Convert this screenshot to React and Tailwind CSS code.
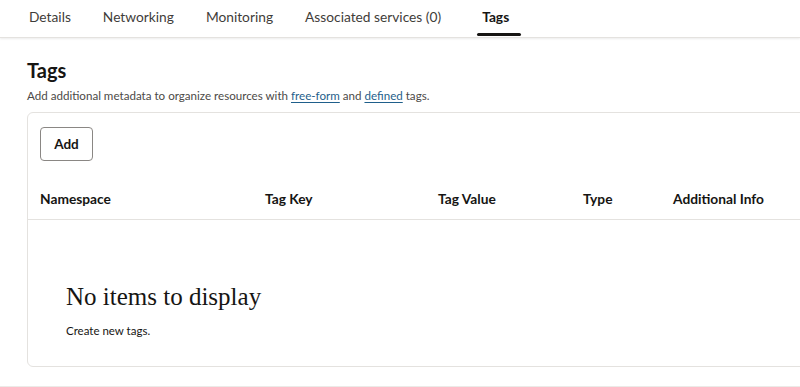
const tabs = ['Details', 'Networking', 'Monitoring', 'Associated services (0)'];

const columns = [
  { label: 'Namespace', w: 'w-[225px]' },
  { label: 'Tag Key', w: 'w-[173px]' },
  { label: 'Tag Value', w: 'w-[145px]' },
  { label: 'Type', w: 'w-[90px]' },
  { label: 'Additional Info', w: 'w-[140px]' },
];

export default function App() {
  return (
    <div className="w-[800px] h-[387px] overflow-hidden bg-white text-[#161513] font-['Lato',sans-serif]">
      {/* Tab bar */}
      <div className="h-[38px] border-b border-[#e4e2df] shadow-[0_1px_2px_rgba(0,0,0,0.08)] flex items-stretch pl-[29px]">
        <div className="flex items-stretch gap-[32px] text-[13.75px] text-[#3f3d3a]">
          {tabs.map((t) => (
            <div key={t} className="flex items-center pb-[3px]">
              {t}
            </div>
          ))}
          <div className="relative flex items-center pb-[3px] ml-[9px] font-bold text-[#161513]">
            Tags
            <span className="absolute -left-[5px] -right-[12px] bottom-[1px] h-[3px] rounded-full bg-[#161513]" />
          </div>
        </div>
      </div>

      {/* Section */}
      <div className="pl-[27px]">
        <h2 className="mt-[18px] text-[20px] leading-[28px] font-bold">Tags</h2>
        <p className="mt-[5px] text-[11.6px] leading-[14px] text-[#4c4a47]">
          Add additional metadata to organize resources with{' '}
          <span className="text-[#1f5f8b] underline underline-offset-2">free-form</span> and{' '}
          <span className="text-[#1f5f8b] underline underline-offset-2">defined</span> tags.
        </p>

        {/* Card */}
        <div className="mt-[9px] w-[800px] h-[255px] border border-[#e4e2df] rounded-[6px]">
          <div className="pl-[12px] pt-[14px]">
            <button className="w-[53px] h-[34px] border border-[#8a8784] rounded-[4px] text-[13.5px] font-bold">
              Add
            </button>
          </div>
          <div className="mt-[20px] h-[39px] border-b border-[#e4e2df] flex items-center pl-[12px] text-[13.75px] font-bold pb-[2px]">
            {columns.map((c) => (
              <div key={c.label} className={c.w}>
                {c.label}
              </div>
            ))}
          </div>
          <div className="pl-[38px] pt-[62px]">
            <div className="text-[25px] leading-[30px] font-['Liberation_Serif',serif]">No items to display</div>
            <div className="mt-[12px] text-[11.5px] leading-[14px]">Create new tags.</div>
          </div>
        </div>
      </div>

      <div className="mt-[19px] border-t-2 border-[#eceae7]" />
    </div>
  );
}
